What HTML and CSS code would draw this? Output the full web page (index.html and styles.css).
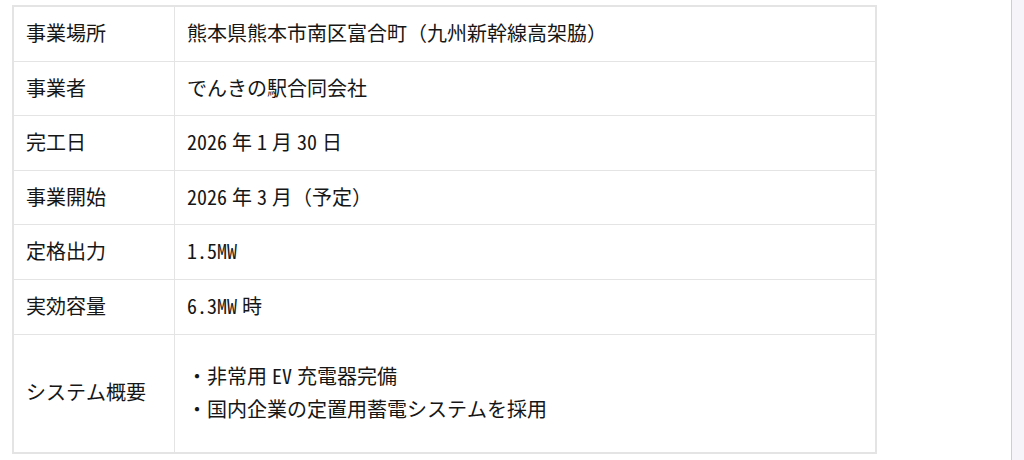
FILE: index.html
```html
<!DOCTYPE html>
<html lang="ja">
<head>
<meta charset="utf-8">
<title>事業概要</title>
<link rel="stylesheet" href="styles.css">
</head>
<body>
<div class="page">
  <main class="content">
    <table class="spec">
      <tbody>
        <tr><th>事業場所</th><td>熊本県熊本市南区富合町（九州新幹線高架脇）</td></tr>
        <tr><th>事業者</th><td>でんきの駅合同会社</td></tr>
        <tr><th>完工日</th><td>2026 年 1 月 30 日</td></tr>
        <tr><th>事業開始</th><td>2026 年 3 月（予定）</td></tr>
        <tr><th>定格出力</th><td>1.5MW</td></tr>
        <tr><th>実効容量</th><td>6.3MW 時</td></tr>
        <tr class="tall">
          <th>システム概要</th>
          <td>
            <ul class="points">
              <li>・非常用 EV 充電器完備</li>
              <li>・国内企業の定置用蓄電システムを採用</li>
            </ul>
          </td>
        </tr>
      </tbody>
    </table>
  </main>
  <div class="track"></div>
</div>
</body>
</html>
```

FILE: styles.css
```css
html, body {
  margin: 0;
  padding: 0;
  background: #ffffff;
}

body {
  font-family: "Noto Sans Mono CJK JP", "Noto Sans CJK JP", "Noto Sans", monospace;
  color: #161616;
}

.page {
  display: flex;
  min-height: 460px;
}

.content {
  flex: 1;
  padding: 5px 0 0 12px;
}

.track {
  width: 12px;
  border-left: 1px solid #cfcdd2;
  background: #f6f4f8;
}

.spec {
  width: 865px;
  border-collapse: collapse;
  border: 2px solid #e4e4e4;
  font-size: 20px;
}

.spec th,
.spec td {
  border: 1px solid #e4e4e4;
  padding: 11px 12px 13px;
  line-height: 29.6px;
  text-align: left;
  vertical-align: middle;
  font-weight: normal;
}

.spec th {
  width: 136px;
  padding-left: 12px;
}

.spec td {
  padding-left: 12px;
  word-spacing: -5px;
}

.tall td {
  padding-top: 24px;
  padding-bottom: 27px;
}

.points {
  list-style: none;
  margin: 0;
  padding: 0;
}

.points li {
  line-height: 33px;
}
```
